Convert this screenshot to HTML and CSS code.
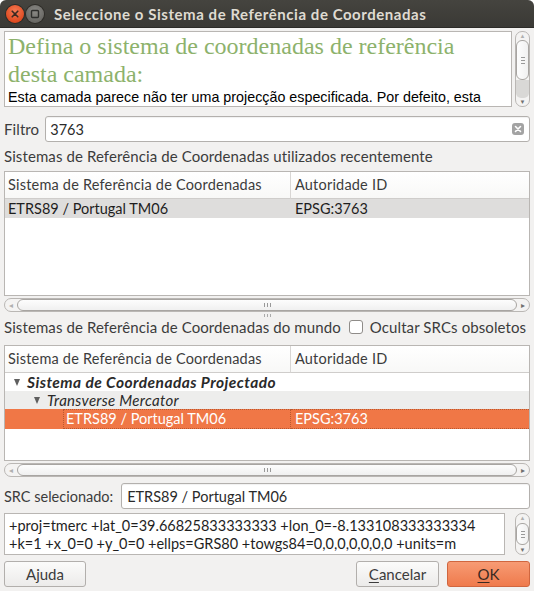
FILE: index.html
```html
<!DOCTYPE html>
<html lang="pt">
<head>
<meta charset="utf-8">
<title>Seleccione o Sistema de Referência de Coordenadas</title>
<link rel="stylesheet" href="styles.css">
</head>
<body>
<div class="window">
  <div class="titlebar">
    <div class="wbtn close">
      <svg width="18" height="18" viewBox="0 0 18 18"><path d="M6.2 6.2 L11.8 11.8 M11.8 6.2 L6.2 11.8" stroke="#3b2a22" stroke-width="1.6" stroke-linecap="round"/></svg>
    </div>
    <div class="wbtn max">
      <svg width="18" height="18" viewBox="0 0 18 18"><rect x="5.5" y="5.5" width="7" height="7" rx="1" fill="none" stroke="#2e2e2c" stroke-width="1.4"/></svg>
    </div>
    <div class="title">Seleccione o Sistema de Referência de Coordenadas</div>
  </div>

  <div class="content">
    <div class="info-row">
      <div class="info">
        <div class="info-title">Defina o sistema de coordenadas de referência desta camada:</div>
        <div class="info-text">Esta camada parece não ter uma projecção especificada. Por defeito, esta</div>
      </div>
      <div class="vscroll">
        <div class="arrow up">▲</div>
        <div class="vthumb"><span class="vgrip"></span></div>
        <div class="vrest"></div>
        <div class="arrow down">▼</div>
      </div>
    </div>

    <div class="filter-row">
      <div class="lbl">Filtro</div>
      <div class="input filter">
        <span>3763</span>
        <svg class="clear" width="12" height="12" viewBox="0 0 12 12"><rect x="0" y="0" width="12" height="12" rx="3" fill="#a3a3a3"/><path d="M3.5 3.5 L8.5 8.5 M8.5 3.5 L3.5 8.5" stroke="#fff" stroke-width="1.6" stroke-linecap="round"/></svg>
      </div>
    </div>

    <div class="section-label">Sistemas de Referência de Coordenadas utilizados recentemente</div>

    <div class="table t1">
      <div class="hcell c1">Sistema de Referência de Coordenadas</div>
      <div class="hcell c2">Autoridade ID</div>
      <div class="cell recent c1">ETRS89 / Portugal TM06</div>
      <div class="cell recent c2">EPSG:3763</div>
    </div>
    <div class="hscroll">
      <div class="harrow">◂</div>
      <div class="hthumb"><span class="hgrip"></span></div>
      <div class="harrow right">▸</div>
    </div>

    <div class="splitter"><span></span></div>

    <div class="world-row">
      <div class="lbl">Sistemas de Referência de Coordenadas do mundo</div>
      <div class="check"></div>
      <div class="lbl">Ocultar SRCs obsoletos</div>
    </div>

    <div class="table t2">
      <div class="hcell c1">Sistema de Referência de Coordenadas</div>
      <div class="hcell c2">Autoridade ID</div>
      <div class="cell span group"><span class="tri lvl0"></span><span class="bi">Sistema de Coordenadas Projectado</span></div>
      <div class="cell span sub"><span class="tri lvl1"></span><span class="it">Transverse Mercator</span></div>
      <div class="cell sel c1"><span class="focus">ETRS89 / Portugal TM06</span></div>
      <div class="cell sel c2"><span class="focus2">EPSG:3763</span></div>
    </div>
    <div class="hscroll">
      <div class="harrow">◂</div>
      <div class="hthumb"><span class="hgrip"></span></div>
      <div class="harrow right">▸</div>
    </div>

    <div class="src-row">
      <div class="lbl src-lbl">SRC selecionado:</div>
      <div class="input src">ETRS89 / Portugal TM06</div>
    </div>

    <div class="proj-row">
      <div class="proj">+proj=tmerc +lat_0=39.66825833333333 +lon_0=-8.133108333333334<br>+k=1 +x_0=0 +y_0=0 +ellps=GRS80 +towgs84=0,0,0,0,0,0,0 +units=m</div>
      <div class="vscroll small">
        <div class="arrow up">▲</div>
        <div class="vthumb small"><span class="vgrip"></span></div>
        <div class="arrow down">▼</div>
      </div>
    </div>

    <div class="buttons">
      <div class="btn help">Ajuda</div>
      <div class="spacer"></div>
      <div class="btn cancel"><u>C</u>ancelar</div>
      <div class="btn ok"><u>O</u>K</div>
    </div>
  </div>
</div>
</body>
</html>
```

FILE: styles.css
```css
* { box-sizing: border-box; }
html {
  -webkit-text-size-adjust: 100%;
  text-size-adjust: 100%;
}
html, body { margin: 0; padding: 0; background: #ffffff; }
body {
  font-family: "Lato", "Open Sans", sans-serif;
  font-size: 14.5px;
  color: #3c3c3c;
}
.window {
  width: 534px;
  height: 591px;
  background: #f2f1f0;
  border-radius: 6px 6px 0 0;
  overflow: hidden;
  display: flex;
  flex-direction: column;
}
.titlebar {
  height: 28px;
  flex: none;
  background: linear-gradient(#45443f, #3a3935);
  display: flex;
  align-items: center;
  padding-left: 6px;
  border-bottom: 1px solid #2c2b28;
}
.wbtn {
  width: 18px;
  height: 18px;
  border-radius: 50%;
  display: flex;
}
.wbtn.close {
  background: radial-gradient(circle at 50% 35%, #f57b55, #e04b21 70%, #c13a16);
  box-shadow: 0 0 0 1px #2e2c28;
}
.wbtn.max {
  margin-left: 2px;
  background: radial-gradient(circle at 50% 35%, #8a8985, #6a6965 70%, #5a5955);
  box-shadow: 0 0 0 1px #2e2c28;
}
.title {
  margin-left: 10px;
  color: #dfdbd2;
  font-weight: bold;
  font-size: 15px;
  letter-spacing: 0.55px;
  white-space: nowrap;
}
.content {
  flex: 1;
  padding: 0 4px;
  display: flex;
  flex-direction: column;
}
.content > * { flex: none; }
.info-row {
  margin-top: 3px;
  height: 76px;
  display: flex;
}
.info {
  flex: 1;
  background: #fff;
  border: 1px solid #b9b6b3;
  padding: 0 4px 0 3px;
  overflow: hidden;
}
.info-title {
  font-family: "Liberation Serif", serif;
  font-size: 24px;
  line-height: 28px;
  color: #8db26c;
}
.info-text {
  font-family: "Liberation Sans", Arial, sans-serif;
  font-size: 14.3px;
  line-height: 18px;
  color: #000;
  white-space: nowrap;
}
.vscroll {
  width: 15px;
  margin-left: 3px;
  border: 1px solid #bab7b4;
  border-radius: 7px;
  background: #f4f3f2;
  display: flex;
  flex-direction: column;
  align-items: center;
  overflow: hidden;
}
.arrow {
  font-size: 6px;
  line-height: 8px;
  height: 8px;
  color: #707070;
}
.arrow.up { color: #b0b0b0; }
.vthumb {
  width: 13px;
  height: 40px;
  background: linear-gradient(90deg, #fdfdfd, #f1f1f1);
  border: 1px solid #a8a5a2;
  border-radius: 6px;
  display: flex;
  align-items: center;
  justify-content: center;
}
.vgrip {
  width: 4px;
  height: 7px;
  border-top: 1px solid #999;
  border-bottom: 1px solid #999;
  position: relative;
}
.vgrip::after {
  content: "";
  position: absolute;
  left: 0; right: 0; top: 2px;
  border-top: 1px solid #999;
}
.vrest {
  flex: 1;
  width: 13px;
  background: #d9d8d6;
  border-radius: 0 0 5px 5px;
}
.filter-row {
  margin-top: 9px;
  height: 26px;
  display: flex;
  align-items: center;
}
.lbl, .section-label {
  white-space: nowrap;
  font-size: 15px;
  letter-spacing: 0.1px;
}
.input {
  height: 26px;
  background: #fff;
  border: 1px solid #b3b0ad;
  border-radius: 3px;
  display: flex;
  align-items: center;
  padding: 0 5px;
  color: #2a2a2a;
  box-shadow: inset 0 1px 1px rgba(0,0,0,0.06);
}
.filter { flex: 1; margin-left: 6px; padding-left: 4px; }
.filter span { flex: 1; }
.section-label {
  margin-top: 5px;
  height: 18px;
  line-height: 18px;
}

/* tables */
.table {
  background: #fff;
  border: 1px solid #b9b6b3;
  display: grid;
  grid-template-columns: 286px 238px;
  grid-auto-rows: 18px;
  align-content: start;
  overflow: hidden;
  white-space: nowrap;
}
.t1 { margin-top: 6px; height: 125px; grid-template-rows: 27px 19px; }
.t2 { margin-top: 9px; height: 116px; grid-template-rows: 27px 18px 18px 20px; }
.hcell {
  height: 27px;
  line-height: 26px;
  border-bottom: 1px solid #cfcdcb;
  background: linear-gradient(#ffffff, #f8f8f7);
  color: #3c3c3c;
  letter-spacing: 0.2px;
  overflow: hidden;
}
.hcell.c1 { padding-left: 3px; border-right: 1px solid #d8d6d4; }
.hcell.c2 { padding-left: 4px; }
.cell {
  display: flex;
  align-items: center;
  color: #1e1e1e;
  overflow: hidden;
}
.cell.c1 { padding-left: 3px; }
.cell.c2 { padding-left: 4px; }
.cell.span { grid-column: 1 / 3; }
.cell.recent { background: #dedddc; }
.cell.sub { background: #ededec; }
.cell.sel { background: #f07746; color: #fff; }
.cell.sel.c1 { padding-left: 58px; }
.cell.sel.c2 { padding-left: 0; }
.focus {
  height: 20px;
  width: 228px;
  line-height: 18px;
  padding-left: 2px;
  border: 1px dotted rgba(120, 50, 20, 0.45);
}
.focus2 {
  height: 20px;
  width: 100%;
  line-height: 18px;
  padding-left: 4px;
  border-top: 1px dotted rgba(120, 50, 20, 0.45);
  border-bottom: 1px dotted rgba(120, 50, 20, 0.45);
}
.tri {
  width: 0; height: 0;
  border-left: 3.5px solid transparent;
  border-right: 3.5px solid transparent;
  border-top: 7px solid #5f5f5f;
  margin-right: 7px;
}
.tri.lvl0 { margin-left: 9px; }
.tri.lvl1 { margin-left: 29px; }
.bi { font-weight: bold; font-style: italic; color: #2a2a2a; font-size: 15.5px; letter-spacing: 0.45px; }
.it { font-style: italic; color: #2a2a2a; font-size: 15px; letter-spacing: 0.3px; }

.hscroll {
  height: 14px;
  margin-top: 2px;
  border: 1px solid #bab7b4;
  border-radius: 7px;
  background: #f4f3f2;
  display: flex;
  align-items: center;
  overflow: hidden;
}
.harrow {
  width: 12px;
  font-size: 8px;
  text-align: center;
  color: #b0b0b0;
  line-height: 12px;
}
.harrow.right { color: #707070; }
.hthumb {
  flex: 1;
  height: 12px;
  background: linear-gradient(#fdfdfd, #f0f0f0);
  border: 1px solid #a8a5a2;
  border-radius: 6px;
  display: flex;
  align-items: center;
  justify-content: center;
}
.hgrip {
  width: 7px;
  height: 4px;
  border-left: 1px solid #999;
  border-right: 1px solid #999;
  position: relative;
}
.hgrip::after {
  content: "";
  position: absolute;
  top: 0; bottom: 0; left: 2px;
  border-left: 1px solid #999;
}
.splitter {
  height: 6px;
  display: flex;
  justify-content: center;
  align-items: center;
}
.splitter span {
  width: 7px;
  height: 3px;
  border-left: 1px solid #aaa;
  border-right: 1px solid #aaa;
  position: relative;
}
.splitter span::after {
  content: "";
  position: absolute;
  top: 0; bottom: 0; left: 2px;
  border-left: 1px solid #aaa;
}
.world-row {
  margin-top: 0;
  height: 18px;
  display: flex;
  align-items: center;
}
.check {
  width: 14px;
  height: 14px;
  margin: 0 7px 0 8px;
  background: #fff;
  border: 1px solid #8f8c89;
  border-radius: 3px;
  flex: none;
}
.src-row {
  margin-top: 6px;
  height: 26px;
  display: flex;
  align-items: center;
}
.lbl.src-lbl { font-size: 14.5px; letter-spacing: 0; }
.src { flex: 1; margin-left: 8px; }
.proj-row {
  margin-top: 4px;
  height: 42px;
  display: flex;
}
.proj {
  flex: 1;
  background: #fff;
  border: 1px solid #b9b6b3;
  padding: 3px 5px 0 4px;
  line-height: 18px;
  color: #1e1e1e;
  white-space: nowrap;
  overflow: hidden;
}
.vscroll.small { width: 15px; margin-left: 10px; justify-content: space-between; }
.vthumb.small { height: 22px; flex: none; }
.buttons {
  margin-top: 6px;
  height: 26px;
  display: flex;
}
.spacer { flex: 1; }
.btn {
  height: 26px;
  border: 1px solid #b2afac;
  border-radius: 3px;
  background: linear-gradient(#fbfbfa, #ecebea);
  display: flex;
  align-items: center;
  justify-content: center;
  color: #3c3c3c;
  font-size: 15px;
}
.btn u { text-decoration: underline; text-underline-offset: 2px; }
.btn.help { width: 82px; }
.btn.cancel { width: 83px; }
.btn.ok {
  width: 83px;
  margin-left: 8px;
  background: linear-gradient(#f79b74, #ef7a4c);
  border-color: #d0663f;
  color: #3a2a22;
}
```
